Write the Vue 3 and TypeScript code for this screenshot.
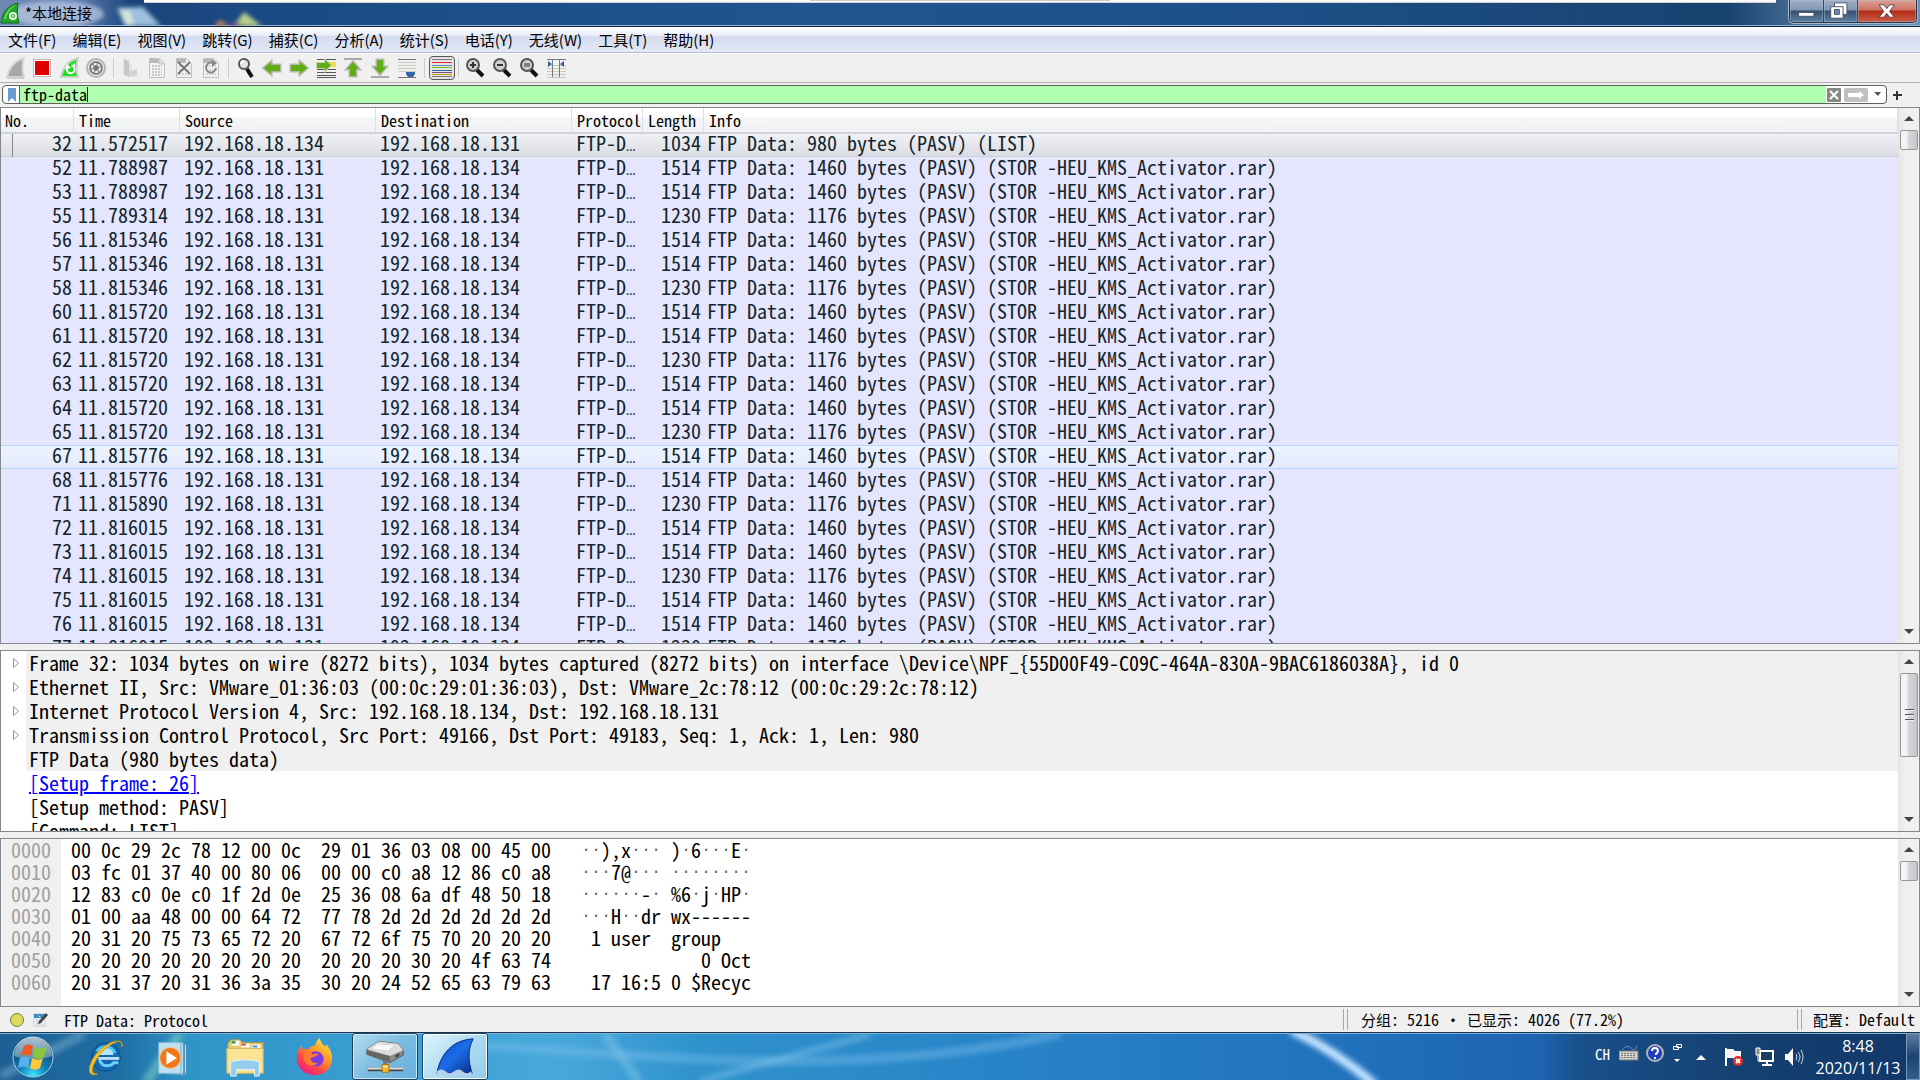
<script setup lang="ts">
import { ref } from 'vue'

interface Packet {
  no: number
  time: string
  src: string
  dst: string
  len: number
  info: string
}

const A = '192.168.18.131'
const B = '192.168.18.134'

const raw: [number, string, number][] = [
  [52, '11.788987', 1514], [53, '11.788987', 1514], [55, '11.789314', 1230],
  [56, '11.815346', 1514], [57, '11.815346', 1514], [58, '11.815346', 1230],
  [60, '11.815720', 1514], [61, '11.815720', 1514], [62, '11.815720', 1230],
  [63, '11.815720', 1514], [64, '11.815720', 1514], [65, '11.815720', 1230],
  [67, '11.815776', 1514], [68, '11.815776', 1514], [71, '11.815890', 1230],
  [72, '11.816015', 1514], [73, '11.816015', 1514], [74, '11.816015', 1230],
  [75, '11.816015', 1514], [76, '11.816015', 1514], [77, '11.816015', 1230],
]

const packets: Packet[] = [
  { no: 32, time: '11.572517', src: B, dst: A, len: 1034, info: 'FTP Data: 980 bytes (PASV) (LIST)' },
  ...raw.map(([no, time, len]) => ({
    no, time, src: A, dst: B, len,
    info: `FTP Data: ${len - 54} bytes (PASV) (STOR -HEU_KMS_Activator.rar)`,
  })),
]

const selected = ref(32)
const hovered = ref(67)
const filter = ref('ftp-data')

const menus = ['文件(F)', '编辑(E)', '视图(V)', '跳转(G)', '捕获(C)', '分析(A)', '统计(S)', '电话(Y)', '无线(W)', '工具(T)', '帮助(H)']
const columns = ['No.', 'Time', 'Source', 'Destination', 'Protocol', 'Length', 'Info']

const tree = [
  'Frame 32: 1034 bytes on wire (8272 bits), 1034 bytes captured (8272 bits) on interface \\Device\\NPF_{55D00F49-C09C-464A-830A-9BAC6186038A}, id 0',
  'Ethernet II, Src: VMware_01:36:03 (00:0c:29:01:36:03), Dst: VMware_2c:78:12 (00:0c:29:2c:78:12)',
  'Internet Protocol Version 4, Src: 192.168.18.134, Dst: 192.168.18.131',
  'Transmission Control Protocol, Src Port: 49166, Dst Port: 49183, Seq: 1, Ack: 1, Len: 980',
]

const dump = [
  { off: '0000', hex: '00 0c 29 2c 78 12 00 0c  29 01 36 03 08 00 45 00', text: '··),x··· )·6···E·' },
  { off: '0010', hex: '03 fc 01 37 40 00 80 06  00 00 c0 a8 12 86 c0 a8', text: '···7@··· ········' },
  { off: '0020', hex: '12 83 c0 0e c0 1f 2d 0e  25 36 08 6a df 48 50 18', text: '······-· %6·j·HP·' },
  { off: '0030', hex: '01 00 aa 48 00 00 64 72  77 78 2d 2d 2d 2d 2d 2d', text: '···H··dr wx------' },
  { off: '0040', hex: '20 31 20 75 73 65 72 20  67 72 6f 75 70 20 20 20', text: ' 1 user  group   ' },
  { off: '0050', hex: '20 20 20 20 20 20 20 20  20 20 20 30 20 4f 63 74', text: '            0 Oct' },
  { off: '0060', hex: '20 31 37 20 31 36 3a 35  30 20 24 52 65 63 79 63', text: ' 17 16:5 0 $Recyc' },
]
</script>

<template>
  <div class="screen">
    <header class="title">
      <svg class="glass" viewBox="0 0 300 26" aria-hidden="true">
        <g filter="url(#soft)">
          <ellipse cx="56" cy="14" rx="48" ry="13" fill="#b9c8e2" opacity=".75" />
          <path d="M117 8l26-1 18 19h-36z" fill="#9fc0de" />
          <path d="M120 10l10 0 4 16h-8z" fill="#d4e4da" />
          <path d="M214 26l6-6 10 6z" fill="#d08a50" />
          <path d="M234 26l10-14 18 14z" fill="#b9cf8c" />
          <path d="M226 26l8-4 10 4z" fill="#8f5090" />
        </g>
        <defs><filter id="soft"><feGaussianBlur stdDeviation="2" /></filter></defs>
      </svg>
      <div class="strip"><i></i></div>
      <svg class="app" viewBox="0 0 20 22" aria-hidden="true">
        <path d="M1 21C2 11 8 3 18 1c-1 6-1 13 1 20z" fill="#22a52a" stroke="#0d6f18" />
        <path d="M4 17C6 9 10 5 16 3c-6 4-9 8-10 14z" fill="#74dc62" />
        <circle cx="13" cy="14" r="3" fill="none" stroke="#e4f7e0" stroke-width="2" />
        <circle cx="13" cy="14" r="1" fill="#e4f7e0" />
      </svg>
      <h1>*本地连接</h1>
      <div class="winbtns">
        <button aria-label="最小化"><svg viewBox="0 0 34 23"><rect x="9" y="13" width="16" height="4" fill="#fff" stroke="#4a5266" /></svg></button>
        <button aria-label="还原"><svg viewBox="0 0 34 23"><path d="M11 3h13v12h-4v4H7V7h4z" fill="#fff" stroke="#4a5266" /><rect x="11" y="10" width="5" height="5" fill="#6f86a8" stroke="#4a5266" /><path d="M11 7h9v9" fill="none" stroke="#4a5266" /></svg></button>
        <button class="close" aria-label="关闭"><svg viewBox="0 0 60 23"><path d="M22 5h5l3 4 3-4h5l-5 7 5 6h-5l-3-4-3 4h-5l5-6z" fill="#fff" stroke="#5a4050" /></svg></button>
      </div>
    </header>

    <nav class="menu"><button v-for="m in menus" :key="m">{{ m }}</button></nav>

    <div class="tools">
      <button aria-label="开始捕获"><svg viewBox="0 0 24 22"><path d="M3 20C5 10 10 4 20 1c-2 7-2 13 0 19z" fill="#a8a8a8" stroke="#d8d8d8" stroke-width="2" /><path d="M3 21h17" stroke="#b8b8b8" /></svg></button>
      <button aria-label="停止捕获"><svg viewBox="0 0 24 22"><rect x="2.5" y="2.5" width="17" height="17" fill="#fff" stroke="#c4b4b4" /><rect x="4" y="4" width="14" height="14" fill="#de0000" /></svg></button>
      <button aria-label="重新开始"><svg viewBox="0 0 24 22"><path d="M3 20C5 10 10 4 20 1c-2 7-2 13 0 19z" fill="#1ee01e" stroke="#c6d4c6" stroke-width="2" /><path d="M9 11a4 4 0 1 0 7-1" fill="none" stroke="#fff" stroke-width="2" /><path d="M7 12l2-5 4 4zM17 6l-4 3 4 3z" fill="#fff" /></svg></button>
      <button aria-label="捕获选项"><svg viewBox="0 0 24 22"><circle cx="11" cy="11" r="9" fill="#f0f0f0" stroke="#b4b4b4" stroke-width="2" /><circle cx="11" cy="11" r="7" fill="#808080" /><circle cx="11" cy="11" r="4" fill="none" stroke="#eee" stroke-width="2" stroke-dasharray="3 1" /><circle cx="11" cy="11" r="2" fill="#777" /></svg></button>
      <i class="sep"></i>
      <button aria-label="打开"><svg viewBox="0 0 24 22"><path d="M4 2h6l3 9v8H4z" fill="#e4e4e4" /><path d="M5 2l5 3v15l-5-3z" fill="#c6c6c6" /><path d="M11 14l7-2v7l-8 1z" fill="#d4d4d4" /></svg></button>
      <button aria-label="保存"><svg viewBox="0 0 24 22"><path d="M3.500 1.500h10l5 5v14h-15z" fill="#f6f6f6" stroke="#c0c0c0" /><path d="M4 2h9v4H4z" fill="#b8b8b8" /><path d="M13 2v5h5" fill="#ddd" stroke="#c0c0c0" /><path d="M6 9h10M6 12h10M6 15h10M6 18h10" stroke="#c4c4c4" stroke-width="2" stroke-dasharray="2 1" /></svg></button>
      <button aria-label="关闭文件"><svg viewBox="0 0 24 22"><path d="M3.500 1.500h10l5 5v14h-15z" fill="#f2f2f2" stroke="#c0c0c0" /><path d="M4 2h9v4H4z" fill="#b8b8b8" /><path d="M6 9h10M6 13h10M6 17h10" stroke="#d0d0d0" stroke-width="2" stroke-dasharray="2 1" /><path d="M5 5l12 12M17 5L5 17" stroke="#777" stroke-width="2" /></svg></button>
      <button aria-label="重新加载"><svg viewBox="0 0 24 22"><path d="M3.500 1.500h10l5 5v14h-15z" fill="#f2f2f2" stroke="#c0c0c0" /><path d="M4 2h9v4H4z" fill="#b8b8b8" /><path d="M6 9h10M6 13h10M6 17h10" stroke="#d0d0d0" stroke-width="2" stroke-dasharray="2 1" /><path d="M13 6a5 5 0 1 0 3 5" fill="none" stroke="#888" stroke-width="2" /><path d="M12 2l5 4-5 4z" fill="#888" /></svg></button>
      <i class="sep"></i>
      <button aria-label="查找分组"><svg viewBox="0 0 24 22"><circle cx="10" cy="7" r="5" fill="#e4e4e4" stroke="#555" stroke-width="2" /><path d="M13 12l5 8" stroke="#111" stroke-width="4" /><path d="M7 7a3 3 0 0 1 3-3" stroke="#fff" fill="none" stroke-width="2" /></svg></button>
      <button aria-label="上一分组"><svg viewBox="0 0 24 22"><path d="M3 11l7-6v3h9v6h-9v3z" fill="#5fae14" stroke="#b4b8ac" stroke-width="3" paint-order="stroke" /></svg></button>
      <button aria-label="下一分组"><svg viewBox="0 0 24 22"><path d="M19 11l-7-6v3H3v6h9v3z" fill="#5fae14" stroke="#b4b8ac" stroke-width="3" paint-order="stroke" /></svg></button>
      <button aria-label="转到分组"><svg viewBox="0 0 24 22"><path d="M2 2.500h19M2 12.500h19M2 15.500h19M2 18.500h19M2 20.500h19" stroke="#555" /><path d="M12 5h9v5h-9z" fill="#f4e03c" /><path d="M16 8l-6-5v3H2v5h8v3z" fill="#5fae14" stroke="#c4d4b0" stroke-width="2" paint-order="stroke" /></svg></button>
      <button aria-label="首个分组"><svg viewBox="0 0 24 22"><path d="M2 2h18" stroke="#aaa" stroke-width="2" /><path d="M11 5l6 7h-3v7H8v-7H5z" fill="#5fae14" stroke="#b4b8ac" stroke-width="3" paint-order="stroke" /></svg></button>
      <button aria-label="最新分组"><svg viewBox="0 0 24 22"><path d="M2 20h18" stroke="#aaa" stroke-width="2" /><path d="M11 17l6-7h-3V3H8v7H5z" fill="#5fae14" stroke="#b4b8ac" stroke-width="3" paint-order="stroke" /></svg></button>
      <button aria-label="自动滚动"><svg viewBox="0 0 24 22"><path d="M2 5.500h18M2 8.500h18M2 11.500h18M2 14.500h18" stroke="#ccccc0" /><path d="M2 2.500h18M2 20.500h18" stroke="#777" /><path d="M10 15h9v2l-2 3h-5l-2-3z" fill="#3464a4" /></svg></button>
      <i class="sep"></i>
      <button class="on" aria-label="着色" aria-pressed="true"><svg viewBox="0 0 24 22"><path d="M2 2.500h20" stroke="#777" /><path d="M2 5.500h20" stroke="#ef2929" /><path d="M2 8.500h20" stroke="#5a8ac4" /><path d="M2 10.500h20" stroke="#73c216" /><path d="M2 13.500h20" stroke="#3465a4" /><path d="M2 15.500h20" stroke="#75507b" /><path d="M2 17.500h20" stroke="#c4a000" /><path d="M2 19.500h20" stroke="#777" /></svg></button>
      <i class="sep"></i>
      <button v-for="z in ['+', '-', '=']" :key="z" aria-label="缩放"><svg viewBox="0 0 24 22"><path d="M13 13l6 6" stroke="#111" stroke-width="4" /><circle cx="9" cy="8" r="6" fill="#cfcfcf" stroke="#555" stroke-width="2" /><path v-if="z === '='" d="M6 7h6M6 9h6" stroke="#333" /><path v-else d="M6 8h6" stroke="#333" stroke-width="2" /><path v-if="z === '+'" d="M9 5v6" stroke="#333" stroke-width="2" /></svg></button>
      <button aria-label="调整列宽"><svg viewBox="0 0 24 22"><path d="M2 8.500h19M2 11.500h19M2 14.500h19M2 17.500h19M2 20.500h19" stroke="#c8c8bc" /><path d="M2 2.500h19" stroke="#777" /><path d="M7.500 2v18M14.500 2v18" stroke="#777" /><path d="M3 4v6l4-3zM19 4v6l-4-3z" fill="#3464a4" /></svg></button>
    </div>

    <div class="filterbar">
      <div class="box">
        <button class="mark" aria-label="书签"><svg viewBox="0 0 17 18"><path d="M5 2h8v14l-4-4-4 4z" fill="#6c9cd4" /></svg></button>
        <div class="entry">
          <input v-model="filter" aria-label="显示过滤器" spellcheck="false" />
          <i class="caret"></i>
        </div>
        <button class="clear" aria-label="清除"><svg viewBox="0 0 14 14"><rect width="14" height="14" rx="1" fill="#888a80" /><path d="M3 3l8 8M11 3l-8 8" stroke="#fff" stroke-width="2" /></svg></button>
        <button class="apply" aria-label="应用"><svg viewBox="0 0 24 14"><rect width="24" height="14" rx="2" fill="#c0c0c0" /><path d="M4 5h11V3l5 4-5 4V9H4z" fill="#fff" /></svg></button>
        <button class="drop" aria-label="历史"><svg viewBox="0 0 8 5"><path d="M0 0h7L4 4z" fill="#555" /></svg></button>
      </div>
      <button class="add" aria-label="添加按钮"><svg viewBox="0 0 9 9"><path d="M4 0v9M0 4h9" stroke="#333" stroke-width="2" /></svg></button>
    </div>

    <main>
      <section class="pane list">
        <div class="body">
          <table>
            <colgroup><col class="c0" /><col class="c1" /><col class="c2" /><col class="c2" /><col class="c4" /><col class="c5" /><col /></colgroup>
            <thead><tr><th v-for="c in columns" :key="c" scope="col">{{ c }}</th></tr></thead>
            <tbody>
              <tr v-for="p in packets" :key="p.no" :class="{ sel: p.no === selected, hov: p.no === hovered }" @click="selected = p.no">
                <td class="num"><i v-if="p.no === selected" class="conv"></i>{{ p.no }}</td>
                <td>{{ p.time }}</td><td>{{ p.src }}</td><td>{{ p.dst }}</td>
                <td>FTP-D<span class="dots">…</span></td>
                <td class="num len">{{ p.len }}</td><td class="info">{{ p.info }}</td>
              </tr>
            </tbody>
          </table>
        </div>
        <div class="scroll"><i class="up"></i><i class="thumb"></i><i class="down"></i></div>
      </section>

      <section class="pane tree">
        <div class="body">
          <div v-for="t in tree" :key="t" class="node"><button aria-label="展开"><svg viewBox="0 0 8 12"><path d="M1.500 1.500v9l5-4.500z" fill="#fff" stroke="#999" /></svg></button><span class="top">{{ t }}</span></div>
          <div class="node"><i></i><span class="top">FTP Data (980 bytes data)</span></div>
          <div class="node"><i></i><span><a href="#26">[Setup frame: 26]</a></span></div>
          <div class="node"><i></i><span>[Setup method: PASV]</span></div>
          <div class="node"><i></i><span>[Command: LIST]</span></div>
        </div>
        <div class="scroll"><i class="up"></i><i class="thumb long"><b></b><b></b><b></b></i><i class="down"></i></div>
      </section>

      <section class="pane hex">
        <div class="offs"><div v-for="d in dump" :key="d.off">{{ d.off }}</div></div>
        <div class="body">
          <div v-for="d in dump" :key="d.off" class="line"><span>{{ d.hex }}</span><span class="asc"><span v-for="(c, i) in d.text" :key="i" :class="{ dot: c === '·' }">{{ c }}</span></span></div>
        </div>
        <div class="scroll"><i class="up"></i><i class="thumb"></i><i class="down"></i></div>
      </section>
    </main>

    <footer class="status">
      <svg class="led" viewBox="0 0 16 16" aria-hidden="true"><circle cx="8" cy="8" r="6.500" fill="#dcdc5a" stroke="#77774a" /></svg>
      <svg class="note" viewBox="0 0 16 16" aria-hidden="true"><rect x="1" y="2" width="11" height="12" fill="#f4f6f8" stroke="#c4ccd4" /><path d="M1 2h11v4H1z" fill="#3c8cc8" /><path d="M5 2l1 2 2 0-2 1" fill="#fff" /><path d="M3 8h7M3 10h6M3 12h7" stroke="#b8c4d0" /><path d="M13 1l2 2-7 8-3 1 1-3z" fill="#444" /></svg>
      <span class="msg">FTP Data: Protocol</span>
      <span class="seg count"><span class="han">分组</span>: 5216 <span class="mid">·</span> <span class="han">已显示</span>: 4026 (77.2%)</span>
      <span class="seg prof"><span class="han">配置</span>: Default</span>
    </footer>

    <div class="taskbar">
      <svg class="aurora" viewBox="0 0 1920 48" preserveAspectRatio="none" aria-hidden="true">
        <defs><filter id="b3" x="-20%" y="-50%" width="140%" height="200%"><feGaussianBlur stdDeviation="3" /></filter></defs>
        <g filter="url(#b3)" fill="none">
          <path d="M0 44L84 0" stroke="#8fc0dc" stroke-width="10" opacity=".4" />
          <path d="M146 50L180 0" stroke="#7fd4c4" stroke-width="9" opacity=".6" />
          <path d="M605 0l34 50" stroke="#8fd0ee" stroke-width="10" opacity=".4" />
          <path d="M480 12C640 20 840 50 1060 0" stroke="#7cc0ee" stroke-width="10" opacity=".4" />
          <path d="M700 50C760 30 820 16 870 0" stroke="#8cc8f0" stroke-width="8" opacity=".4" />
        </g>
        <path d="M1292 -4Q1336 18 1374 52" fill="none" stroke="#b4d8fa" stroke-width="10" filter="url(#b3)" />
        <path d="M1292 -4Q1336 18 1374 52" fill="none" stroke="#b4d8fa" stroke-width="5" opacity=".6" />
      </svg>
      <button class="start" aria-label="开始">
        <svg viewBox="0 0 44 44">
          <defs>
            <radialGradient id="orb" cx=".5" cy=".95" r=".9"><stop offset="0" stop-color="#3fe4ff" /><stop offset=".4" stop-color="#0f7cb4" /><stop offset="1" stop-color="#0c3c62" /></radialGradient>
            <linearGradient id="gl" x1="0" y1="0" x2="0" y2="1"><stop offset="0" stop-color="#e4eef4" /><stop offset="1" stop-color="#7898ac" /></linearGradient>
          </defs>
          <circle cx="22" cy="22" r="20" fill="url(#orb)" stroke="#9fd0e8" stroke-width="1" />
          <path d="M3 21a19 19 0 0 1 38 0q-19 7-38 0z" fill="url(#gl)" opacity=".75" />
          <path d="M13 11q5-3 9 0l-2 10q-5-3-10 0z" fill="#ee5a24" />
          <path d="M24 12q4 3 12 0l-3 10q-6 3-11 0z" fill="#8cc83c" />
          <path d="M9 23q5-3 10 0l-2 10q-4-3-10 0z" fill="#58b0ec" />
          <path d="M21 23q6 3 11 0l-3 10q-5 3-10 0z" fill="#fcc838" />
        </svg>
      </button>
      <button class="task" aria-label="Internet Explorer">
        <svg viewBox="0 0 44 44">
          <circle cx="23" cy="22" r="15" fill="#1268b4" stroke="#0b4a88" />
          <path d="M12 16a12 12 0 0 1 22 2z" fill="#54c4f4" />
          <path d="M16 20q2-7 8-7t7 7z" fill="#b4e4fa" />
          <path d="M15 25h22v-3H15z" fill="#e0f4fe" opacity=".85" />
          <path d="M16 25q3 7 9 6 4 0 6-3h5" fill="none" stroke="#6cd0f8" stroke-width="3" />
          <path d="M40 11Q40 1 26 8 10 17 6 32q-2 11 8 8Q4 40 12 26 20 12 34 6q6-2 6 5z" fill="#f8c428" stroke="#d09c14" stroke-width="1" />
        </svg>
      </button>
      <button class="task" aria-label="Media Player">
        <svg viewBox="0 0 44 44"><path d="M12 9h22v33l-22-2z" fill="#5898bc" /><path d="M10 7h20v33l-20-1z" fill="#a4d4ec" /><path d="M30 8v31M33 9v30" stroke="#b8def0" /><rect x="5" y="7" width="23" height="32" fill="#c0e0f0" stroke="#88bcd8" /><circle cx="17" cy="23" r="11" fill="#f07818" stroke="#fcc088" /><path d="M13 16v14l11-7z" fill="#fff" /></svg>
      </button>
      <button class="task" aria-label="资源管理器">
        <svg viewBox="0 0 44 44"><path d="M4 8l3-4h10l2 3h22v32H4z" fill="#e8cc6c" stroke="#b4944c" /><path d="M8 5h8v5H8z" fill="#fff" /><path d="M8 5h4v3H8z" fill="#3c9c4c" /><path d="M18 8h9v4h-9z" fill="#fff" /><path d="M18 8h5v2h-5z" fill="#dc5438" /><path d="M29 9h9v4h-9z" fill="#fff" /><path d="M30 10h5v2h-5z" fill="#3c8cdc" /><path d="M3 13h38v26H3z" fill="#f8e494" stroke="#d0b464" /><path d="M7 42V27q15-4 30 0v15h-5v-7H13v7z" fill="#94ccec" stroke="#e0f4fc" /></svg>
      </button>
      <button class="task" aria-label="Firefox">
        <svg viewBox="0 0 44 44">
          <defs><linearGradient id="ff" x1=".9" y1="0" x2=".2" y2="1"><stop offset="0" stop-color="#fff04c" /><stop offset=".4" stop-color="#ff9a28" /><stop offset=".75" stop-color="#ff3c50" /><stop offset="1" stop-color="#e41c90" /></linearGradient></defs>
          <path d="M22 41C10 41 3 33 3 23c0-6 2-10 5-13l1 4c2-1 4-1 6 0 2-3 5-4 7-4 1-3 2-6 5-8 1 5 3 7 6 9l1-2c4 5 6 9 6 14 0 11-8 18-18 18z" fill="url(#ff)" />
          <circle cx="23" cy="24" r="8" fill="#7a3ce0" />
          <path d="M9 16c4-2 8 0 10 3l7-1c-3 5-6 3-8 5s2 6 7 5c-5 6-14 2-15-4z" fill="#ff7a2c" />
        </svg>
      </button>
      <button class="task run" aria-label="网络驱动器">
        <svg viewBox="0 0 44 44"><path d="M3 14L13 7q2-1 5-1l18 2 5 7v5l-14 8L3 19z" fill="#8c8c8c" stroke="#555" /><path d="M3 14L13 7q2-1 5-1l18 2 5 7-14 6z" fill="#dcdcdc" /><path d="M14 9l17 1-6 5-16-2z" fill="#fafafa" /><path d="M3 15l24 6v6L3 19z" fill="#666" /><path d="M33 20l4-2v3l-4 2z" fill="#444" /><path d="M20 26h4v8h-4z" fill="#777" /><path d="M4 33h37v4H4z" fill="#444" /><path d="M4 33h37v2H4z" fill="#dce4e4" /><rect x="19" y="30" width="7" height="8" fill="#f0b82c" stroke="#a87414" /><path d="M20 32h5" stroke="#ffe890" stroke-width="2" /></svg>
      </button>
      <button class="task run cur" aria-label="Wireshark">
        <svg viewBox="0 0 44 44"><defs><linearGradient id="fin" x1="0" y1="0" x2="1" y2="1"><stop offset="0" stop-color="#0b4cc8" /><stop offset=".5" stop-color="#1c6ce8" /><stop offset="1" stop-color="#0a2c84" /></linearGradient></defs><path d="M3 39C7 18 20 4 41 3c-6 12-5 24-1 36z" fill="url(#fin)" stroke="#0c2c74" /><path d="M3 37q5-4 9 0t9 0 9 0 9 0l1 4H3z" fill="#b8d0f0" /></svg>
      </button>
      <div class="tray">
        <span class="lang">CH</span>
        <svg class="kb" viewBox="0 0 20 16" aria-hidden="true"><path d="M3 5Q8-1 12 3t6-2" fill="none" stroke="#6c8ca4" /><rect x="0" y="6" width="19" height="9" fill="#d4d4cc" stroke="#777" /><path d="M2 8.500h15M2 10.500h15M2 12.500h15" stroke="#777" stroke-dasharray="2 1" /></svg>
        <svg class="help" viewBox="0 0 20 20" aria-hidden="true"><circle cx="10" cy="10" r="8" fill="#1c3cc0" stroke="#b4b4b4" stroke-width="2" /><path d="M7 8q0-3 3-3t3 3q0 1-2 3v1M10 14v2" fill="none" stroke="#fff" stroke-width="2" /></svg>
        <svg class="opt" viewBox="0 0 9 20" aria-hidden="true"><path d="M3.500 1.500h5v3h-5zM.5 3.500h5v3h-5z" fill="#16406f" stroke="#fff" /><path d="M1 16h6l-3 3z" fill="#fff" /></svg>
        <svg class="tri" viewBox="0 0 10 6" aria-hidden="true"><path d="M0 6l5-5 5 5z" fill="#fff" /></svg>
        <svg class="ti" viewBox="0 0 20 20" aria-hidden="true"><path d="M2 1v18" stroke="#fff" stroke-width="2" /><path d="M3 2h6l2 2h6v9h-6l-2-2H3z" fill="#f4f4f4" /><circle cx="14" cy="14" r="5" fill="#dc2c24" /><path d="M12 12l4 4M16 12l-4 4" stroke="#fff" stroke-width="2" /></svg>
        <svg class="ti" viewBox="0 0 20 20" aria-hidden="true"><rect x="6" y="4" width="13" height="10" fill="#1c3c60" stroke="#fff" stroke-width="2" /><path d="M8 18h10M13 14v4" stroke="#fff" stroke-width="2" /><path d="M2 1h4v7H2z" fill="#888" stroke="#fff" /><path d="M4 8v6h4" fill="none" stroke="#fff" /></svg>
        <svg class="ti" viewBox="0 0 20 20" aria-hidden="true"><path d="M1 7h3l5-6v18l-5-6H1z" fill="#fff" /><path d="M12 7q2 3 0 6M14 5q4 5 0 10M17 3q4 7 0 14" fill="none" stroke="#c8d8e8" /></svg>
        <div class="clock"><time>8:48</time><time>2020/11/13</time></div>
        <button class="peek" aria-label="显示桌面"></button>
      </div>
    </div>
  </div>
</template>

<style>
body { margin: 0; overflow: hidden; }
</style>

<style scoped>
.screen { --mono: "Noto Sans Mono CJK SC", "Liberation Mono", monospace; --ui: "Noto Sans CJK SC", sans-serif; display: flex; flex-direction: column; height: 100vh; background: #f0f0f0; color: #000; font-family: var(--ui); overflow: hidden; }
button { display: flex; align-items: center; justify-content: center; padding: 0; margin: 0; border: 0; background: none; font: inherit; color: inherit; }
svg { display: block; flex: none; }

.title { position: relative; display: flex; align-items: flex-start; box-sizing: border-box; height: 27px; flex: none; border-bottom: 1px solid #14233c; box-shadow: inset 0 -1px #8fb4dc; background: linear-gradient(90deg, #7088b4 0, #5c7cae 80px, #1a457c 130px, #1b4a82 260px, #1f5690 42%, #1d5088 66%, #18426f 90%, #4c7098 94%, #6f8fb2 100%); }
.glass { position: absolute; left: 0; top: 0; width: 300px; height: 26px; }
.strip { position: absolute; left: 144px; right: 144px; top: 0; height: 2px; background: #fcfcfc; border-bottom: 1px solid #d4d0c8; }
.strip i { position: absolute; left: 666px; width: 300px; top: 0; height: 1px; background: #ccc; }
.app { position: relative; width: 20px; height: 22px; margin: 2px 5px 0 0; }
h1 { position: relative; margin: 0; font-size: 15px; font-weight: 400; line-height: 26px; }
.winbtns { position: relative; display: flex; margin: 0 3px 0 auto; border: 1px solid #26364c; border-top: 0; border-radius: 0 0 5px 5px; overflow: hidden; box-shadow: 0 0 0 1px #a4b8cc; }
.winbtns button { width: 34px; height: 22px; border-right: 1px solid #34465e; background: linear-gradient(#a0b0c4, #8098b4 45%, #34506f 50%, #5f80a4); box-shadow: inset 0 0 0 1px #b4c4d466; }
.winbtns svg { height: 22px; }
.winbtns .close { width: 58px; border-right: 0; background: linear-gradient(#dca094, #cc7464 45%, #b02c18 50%, #cc5c44); }

.menu { display: flex; gap: 16px; flex: none; height: 25px; padding-left: 8px; border-bottom: 1px solid #b4bcd4; background: linear-gradient(#fff, #e6ebf5 9px, #d4dbee 9px, #e2e8f6); font-size: 15px; }
.tools { display: flex; align-items: center; gap: 3px; flex: none; height: 28px; padding-left: 4px; border-top: 1px solid #fff; border-bottom: 1px solid #b0b0b0; }
.tools button { width: 24px; height: 24px; }
.tools svg { width: 24px; height: 22px; }
.tools .on { box-sizing: border-box; width: 26px; height: 24px; margin: 0 -1px; border: 1px solid #555; border-radius: 4px; background: #e4e4e4; }
.sep { width: 1px; height: 20px; margin: 0 2px 0 1px; background: #ccc; }

.filterbar { display: flex; align-items: flex-start; flex: none; height: 22px; padding: 2px 0 0 2px; }
.box { display: flex; align-items: center; flex: 1; box-sizing: border-box; height: 19px; border: 1px solid #5c6058; border-radius: 4px; background: #fff; overflow: hidden; }
.mark { width: 17px; height: 17px; border-right: 1px solid #5c6058; }
.mark svg { width: 17px; height: 18px; }
.entry { position: relative; display: flex; flex: 1; }
.entry input { flex: 1; min-width: 0; height: 17px; padding: 0 3px; border: 0; outline: 0; background: #afffaf; font: 16px/17px var(--mono); }
.caret { position: absolute; left: 67px; top: 1px; width: 1px; height: 15px; background: #500050; }
.clear { width: 16px; }
.clear svg { width: 14px; height: 14px; }
.apply { width: 28px; }
.apply svg { width: 24px; height: 14px; }
.drop { width: 16px; }
.drop svg { width: 8px; height: 5px; }
.add { width: 33px; height: 20px; padding-right: 12px; box-sizing: border-box; }
.add svg { width: 9px; height: 9px; }

main { display: flex; flex-direction: column; gap: 6px; flex: 1; min-height: 0; }
.pane { display: flex; box-sizing: border-box; min-height: 0; border: 1px solid #828790; background: #fff; font: 20px/22px var(--mono); }
.list { flex: 535 1 0; }
.tree { flex: 180 1 0; line-height: 24px; }
.hex { flex: 167 1 0; }
.body { flex: 1; min-width: 0; overflow: hidden; white-space: pre; }
table { width: 100%; table-layout: fixed; border-collapse: separate; border-spacing: 0; background: #e6e5fe; color: #12272e; }
.c0 { width: 73px; } .c1 { width: 106px; } .c2 { width: 196px; } .c4 { width: 71px; } .c5 { width: 61px; }
th { box-sizing: border-box; height: 25px; padding: 0 0 0 5px; text-align: left; font: 16px/22px var(--mono); color: #000; border-right: 1px solid #dcdfe4; border-bottom: 1px solid #d0d2d8; background: linear-gradient(#fff 9px, #f5f6f8 9px, #f0f1f3); }
th:first-child { padding-left: 4px; }
td { box-sizing: border-box; height: 24px; padding: 0 0 4px 4px; line-height: 20px; vertical-align: top; }
td.num { position: relative; text-align: right; padding: 0 2px 4px 0; }
td.len { padding-right: 3px; }
td.info { padding-left: 3px; }
.conv { position: absolute; left: 11px; top: 1px; width: 1px; height: 23px; background: #888; }
.sel td { background: linear-gradient(#f1f2f7, #dadce2); box-shadow: inset 0 1px #d0d2dc, inset 0 -1px #cfd0d6; }
.hov td { background: linear-gradient(#eef2ff, #e4ebfe); box-shadow: inset 0 1px #b8d6fb, inset 0 -1px #b8d6fb; }
.dots { font: 16px/1px "Liberation Mono", monospace; }

.scroll { display: flex; flex-direction: column; align-items: center; box-sizing: border-box; width: 21px; flex: none; border-left: 1px solid #e4e4e4; background: linear-gradient(90deg, #e8e8e8, #f0f0f0 8px); }
.up, .down { width: 0; height: 0; border: 5px solid transparent; }
.up { margin: 3px 0 9px; border-bottom-color: #444; }
.down { margin: auto 0 4px; border-top-color: #444; }
.thumb { box-sizing: border-box; width: 18px; height: 20px; display: flex; flex-direction: column; align-items: center; justify-content: center; gap: 3px; border: 1px solid #979797; border-radius: 2px; background: linear-gradient(90deg, #f4f4f4 6px, #d8d8dc 7px, #c4c4cc); }
.long { height: 84px; }
.thumb b { width: 9px; height: 1px; background: #555; border-bottom: 1px solid #eee; }

.node { display: flex; height: 24px; }
.node > button, .node > i { width: 25px; flex: none; }
.node > button svg { width: 8px; height: 12px; margin-left: 4px; }
.node > span { flex: 1; padding-left: 3px; }
.node .top { background: #f0f0f0; }
.node a { color: #0000ff; }

.offs { width: 60px; flex: none; background: #f0f0f0; color: #a0a0a0; text-align: center; overflow: hidden; }
.line { display: flex; height: 22px; gap: 30px; padding-left: 10px; }
.asc { display: flex; }
.asc span { width: 10px; display: flex; justify-content: center; }
.asc .dot { color: #666; font-family: "Liberation Mono", monospace; font-size: 16px; }

.status { display: flex; align-items: center; flex: none; height: 25px; font: 16px/24px var(--mono); white-space: pre; }
.led { width: 16px; height: 16px; margin-left: 9px; }
.note { width: 16px; height: 16px; margin-left: 8px; }
.msg { margin-left: 15px; flex: 1; }
.seg { border-left: 1px solid #a8a8a8; padding-left: 15px; line-height: 20px; position: relative; }
.seg::before { content: ""; position: absolute; left: 3px; top: 0; bottom: 0; width: 1px; background: #a8a8a8; }
.count { width: 436px; padding-left: 17px; }
.prof { padding-right: 5px; }
.han { font-size: 15px; }
.mid { display: inline-flex; width: 12px; justify-content: center; }

.taskbar { position: relative; display: flex; align-items: stretch; flex: none; box-sizing: border-box; height: 48px; border-top: 1px solid #1c3450; box-shadow: inset 0 1px #7cb4dc; background: linear-gradient(90deg, #1d5f92 0, #1f6ea4 120px, #2f94c8 190px, #3aa0d4 400px, #48a8dc 560px, #2f92cc 700px, #2884c8 1000px, #2274be 1300px, #1e64b0 1540px, #194f8a 1580px, #143f6e 1760px, #12386a 1920px); }
.aurora { position: absolute; left: 0; top: 1px; width: 100%; height: 46px; }
.start { position: relative; width: 72px; padding-right: 6px; }
.start svg { width: 44px; height: 44px; }
.task { position: relative; width: 66px; margin-right: 4px; box-sizing: border-box; }
.task svg { width: 44px; height: 42px; }
.run { border: 1px solid #20425c; border-radius: 3px; background: linear-gradient(135deg, #b4dcf0, #7cbce0 50%, #68b0dc); box-shadow: inset 0 0 0 1px #c8e8f8; }
.cur { background: linear-gradient(135deg, #e0f4fc, #b0dcf2 50%, #90ccec); box-shadow: inset 0 0 0 1px #fff; }
.tray { position: relative; display: flex; align-items: center; margin-left: auto; color: #fff; }
.lang { width: 24px; font: 15px/20px var(--mono); margin-bottom: 6px; }
.kb { width: 20px; height: 16px; margin-bottom: 8px; }
.help { width: 20px; height: 20px; margin: 0 8px 8px 6px; }
.opt { width: 9px; height: 20px; margin: 0 14px 8px 0; }
.tri { width: 10px; height: 6px; margin-right: 18px; }
.ti { width: 20px; height: 20px; margin-right: 10px; }
.clock { display: flex; flex-direction: column; align-items: center; width: 88px; font: 16px/22px "Open Sans", sans-serif; }
.peek { align-self: stretch; width: 14px; margin-left: 4px; box-sizing: border-box; border: 1px solid #7898b8; background: linear-gradient(#5c7ca0, #1c4470 50%, #34608c); }
</style>
